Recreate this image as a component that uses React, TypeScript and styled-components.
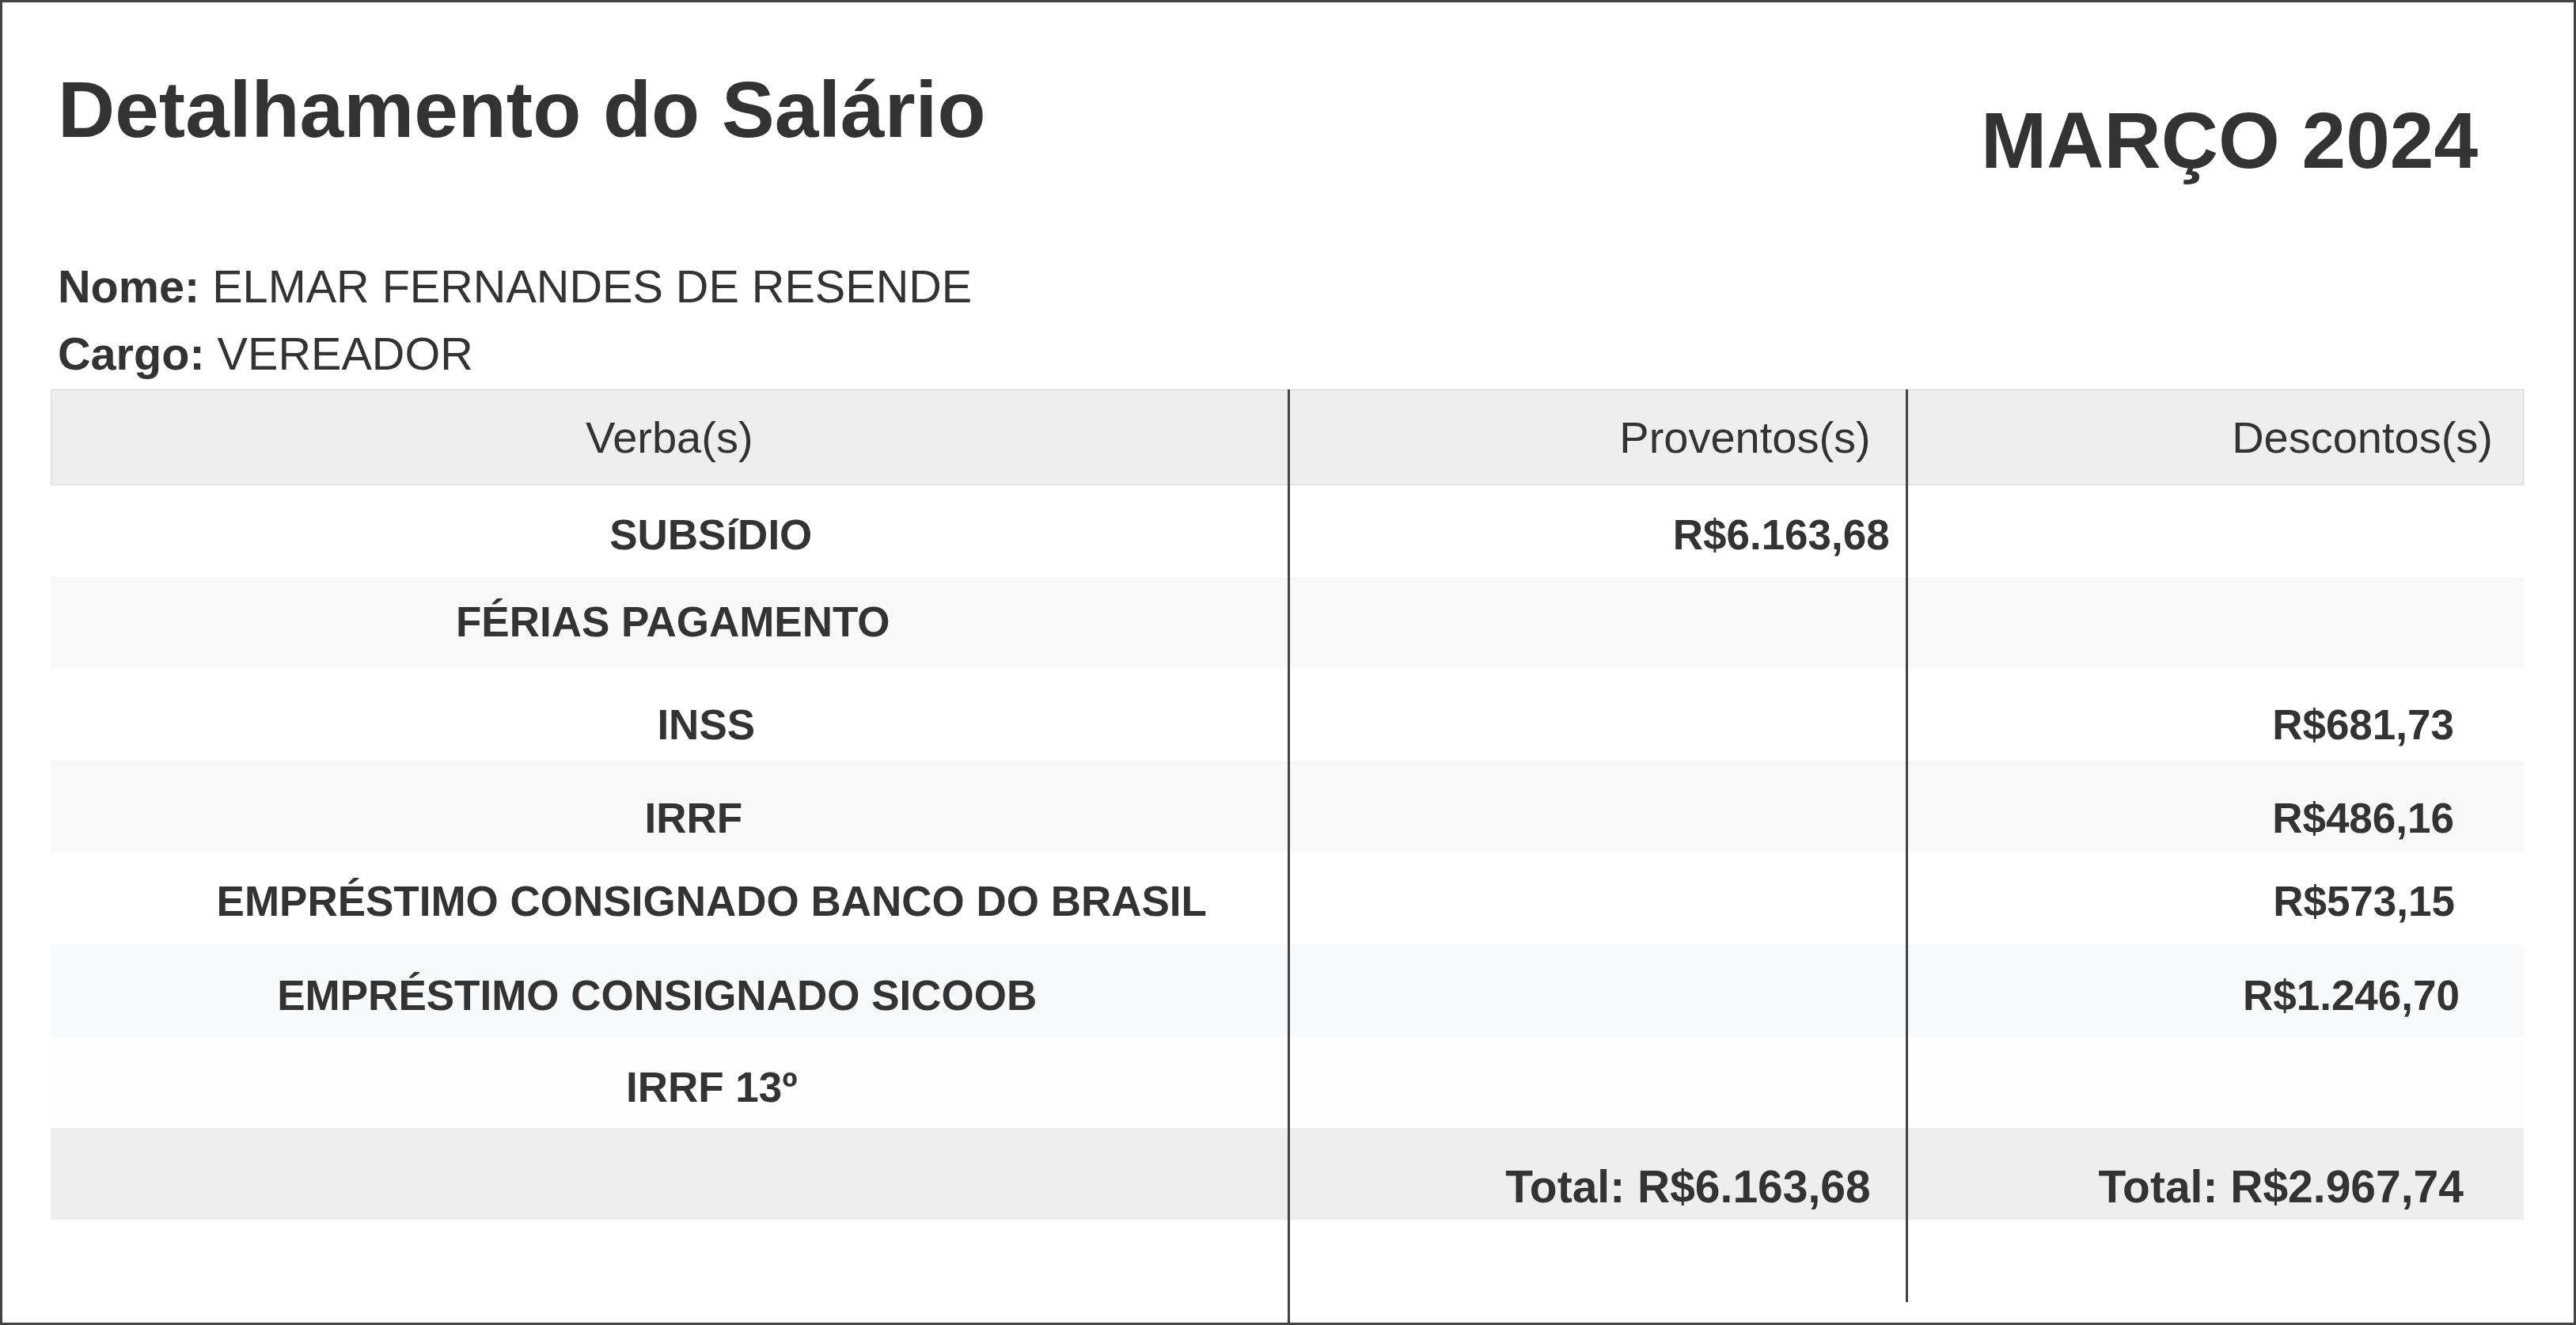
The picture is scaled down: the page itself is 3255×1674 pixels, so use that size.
import React from "react";
import styled, { createGlobalStyle } from "styled-components";

const GlobalStyle = createGlobalStyle`
  html, body {
    margin: 0;
    padding: 0;
    background: #ffffff;
  }
  body {
    font-family: "Liberation Sans", Arial, Helvetica, sans-serif;
    color: #333333;
  }
  * { box-sizing: border-box; }
`;

const Page = styled.div`
  height: 100vh;
  border: 3px solid #444444;
  display: flex;
  flex-direction: column;
  overflow: hidden;
  background: #ffffff;
`;

const Header = styled.header`
  display: flex;
  justify-content: space-between;
  align-items: flex-start;
  padding: 0 121px 0 70px;
`;

const Title = styled.h1`
  margin: 85px 0 0 0;
  font-size: 100px;
  line-height: 100px;
  font-weight: 700;
  color: #333333;
  white-space: nowrap;
`;

const Month = styled.h2`
  margin: 124px 0 0 0;
  font-size: 100px;
  line-height: 100px;
  font-weight: 700;
  color: #333333;
  white-space: nowrap;
`;

const Info = styled.div`
  margin-top: 93px;
  padding-left: 70px;
`;

const InfoLine = styled.p`
  margin: 0;
  font-size: 57.6px;
  line-height: 85px;
  color: #333333;
  white-space: nowrap;
`;

const Label = styled.strong`
  font-weight: 700;
`;

const Table = styled.div`
  flex: 1;
  display: flex;
  align-items: flex-start;
  margin: 2px 63px 0 61px;
`;

const Column = styled.div<{ $basis: string; $divider?: boolean; $stretch?: boolean; $tail?: number }>`
  flex: 0 0 ${(p) => p.$basis};
  display: flex;
  flex-direction: column;
  align-self: ${(p) => (p.$stretch ? "stretch" : "flex-start")};
  border-left: ${(p) => (p.$divider ? "3px solid #444444" : "none")};
  padding-bottom: ${(p) => p.$tail ?? 0}px;
`;

const HeadCell = styled.div<{ $align: "center" | "right"; $pad: number; $edge?: "left" | "right" }>`
  height: 121px;
  display: flex;
  align-items: center;
  justify-content: ${(p) => (p.$align === "center" ? "center" : "flex-end")};
  padding-right: ${(p) => p.$pad}px;
  background: #eeeeee;
  border-top: 1px solid #d2d2d2;
  border-bottom: 1px solid #d8d8d8;
  border-left: ${(p) => (p.$edge === "left" ? "1px solid #d2d2d2" : "none")};
  border-right: ${(p) => (p.$edge === "right" ? "1px solid #d2d2d2" : "none")};
  font-size: 56px;
  line-height: 56px;
  font-weight: 400;
  color: #333333;
  white-space: nowrap;
`;

const Cell = styled.div<{
  $bg: string;
  $align: "center" | "right";
  $dy: number;
  $padL: number;
  $padR: number;
  $size: number;
}>`
  height: 116px;
  display: flex;
  align-items: center;
  justify-content: ${(p) => (p.$align === "center" ? "center" : "flex-end")};
  background: ${(p) => p.$bg};
  padding-top: ${(p) => (p.$dy > 0 ? p.$dy * 2 : 0)}px;
  padding-bottom: ${(p) => (p.$dy < 0 ? -p.$dy * 2 : 0)}px;
  padding-left: ${(p) => p.$padL}px;
  padding-right: ${(p) => p.$padR}px;
  font-size: ${(p) => p.$size}px;
  line-height: ${(p) => p.$size}px;
  font-weight: 700;
  color: #333333;
  white-space: nowrap;
`;

type Row = {
  label: string;
  dx: number;
  dy: number;
  bg: string;
  prov?: string;
  provPad?: number;
  desc?: string;
  descPad?: number;
};

const rows: Row[] = [
  { label: "SUBSíDIO", dx: 53, dy: 4, bg: "#ffffff", prov: "R$6.163,68", provPad: 20 },
  { label: "FÉRIAS PAGAMENTO", dx: 5, dy: -2, bg: "#f8f8f8" },
  { label: "INSS", dx: 47, dy: 12, bg: "#ffffff", desc: "R$681,73", descPad: 88 },
  { label: "IRRF", dx: 31, dy: 14, bg: "#f8f8f8", desc: "R$486,16", descPad: 88 },
  {
    label: "EMPRÉSTIMO CONSIGNADO BANCO DO BRASIL",
    dx: 54,
    dy: 3,
    bg: "#ffffff",
    desc: "R$573,15",
    descPad: 87,
  },
  {
    label: "EMPRÉSTIMO CONSIGNADO SICOOB",
    dx: -15,
    dy: 6,
    bg: "#f8f9fa",
    desc: "R$1.246,70",
    descPad: 81,
  },
  { label: "IRRF 13º", dx: 54, dy: 6, bg: "#fdfdfd" },
];

const totalRow = { bg: "#eeeeee", dy: 16 };

export default function App() {
  return (
    <>
      <GlobalStyle />
      <Page>
        <Header>
          <Title>Detalhamento do Salário</Title>
          <Month>MARÇO 2024</Month>
        </Header>
        <Info>
          <InfoLine>
            <Label>Nome:</Label> ELMAR FERNANDES DE RESENDE
          </InfoLine>
          <InfoLine>
            <Label>Cargo:</Label> VEREADOR
          </InfoLine>
        </Info>
        <Table>
          <Column $basis="50%">
            <HeadCell $align="center" $pad={0} $edge="left">
              Verba(s)
            </HeadCell>
            {rows.map((r, i) => (
              <Cell
                key={i}
                $bg={r.bg}
                $align="center"
                $dy={r.dy}
                $padL={r.dx > 0 ? r.dx * 2 : 0}
                $padR={r.dx < 0 ? -r.dx * 2 : 0}
                $size={53}
              >
                {r.label}
              </Cell>
            ))}
            <Cell $bg={totalRow.bg} $align="center" $dy={totalRow.dy} $padL={0} $padR={0} $size={57} />
          </Column>
          <Column $basis="25%" $divider $stretch>
            <HeadCell $align="right" $pad={44}>
              Proventos(s)
            </HeadCell>
            {rows.map((r, i) => (
              <Cell key={i} $bg={r.bg} $align="right" $dy={r.dy} $padL={0} $padR={r.provPad ?? 20} $size={53}>
                {r.prov ?? ""}
              </Cell>
            ))}
            <Cell $bg={totalRow.bg} $align="right" $dy={totalRow.dy} $padL={0} $padR={44} $size={57}>
              Total: R$6.163,68
            </Cell>
          </Column>
          <Column $basis="25%" $divider $tail={104}>
            <HeadCell $align="right" $pad={38} $edge="right">
              Descontos(s)
            </HeadCell>
            {rows.map((r, i) => (
              <Cell key={i} $bg={r.bg} $align="right" $dy={r.dy} $padL={0} $padR={r.descPad ?? 88} $size={53}>
                {r.desc ?? ""}
              </Cell>
            ))}
            <Cell $bg={totalRow.bg} $align="right" $dy={totalRow.dy} $padL={0} $padR={76} $size={57}>
              Total: R$2.967,74
            </Cell>
          </Column>
        </Table>
      </Page>
    </>
  );
}
